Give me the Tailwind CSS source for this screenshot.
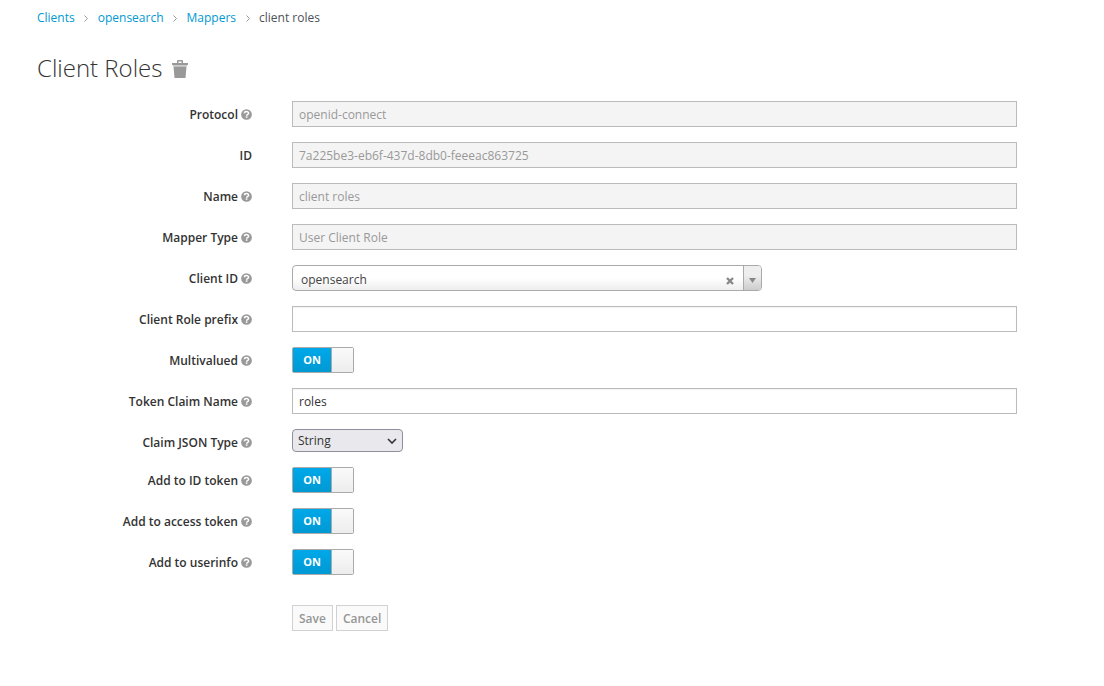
<!DOCTYPE html>
<html lang="en">
<head>
<meta charset="utf-8">
<meta name="viewport" content="width=device-width, initial-scale=1">
<title>Client Roles</title>
<script src="https://cdn.jsdelivr.net/npm/@tailwindcss/browser@4"></script>
</head>
<body class="bg-white font-['Open_Sans',sans-serif] text-xs text-[#333]">
<svg class="hidden" aria-hidden="true">
  <symbol id="help" viewBox="0 0 20 20">
    <circle cx="10" cy="10" r="9.700" fill="#999"/>
    <path d="M6.300 7.800C6.400 5.700 7.800 4.700 10 4.700c2.200 0 3.800 1.100 3.800 3 0 2.600-3.600 2.300-3.600 4.500" fill="none" stroke="#fff" stroke-width="2.800"/>
    <rect x="8.700" y="13.300" width="3" height="2.700" fill="#fff"/>
  </symbol>
</svg>
<main class="pl-[37px] pr-[87px] pb-10">
  <nav aria-label="Breadcrumb" class="pt-2">
    <ol class="flex items-center leading-5">
      <li><a href="#" class="text-[#0099d3]">Clients</a></li>
      <li aria-hidden="true" class="flex w-[23px] justify-center"><svg class="h-[7px] w-1" viewBox="0 0 4 7"><path d="M.5.5l3 3-3 3" fill="none" stroke="#999"/></svg></li>
      <li><a href="#" class="text-[#0099d3]">opensearch</a></li>
      <li aria-hidden="true" class="flex w-[23px] justify-center"><svg class="h-[7px] w-1" viewBox="0 0 4 7"><path d="M.5.5l3 3-3 3" fill="none" stroke="#999"/></svg></li>
      <li><a href="#" class="text-[#0099d3]">Mappers</a></li>
      <li aria-hidden="true" class="flex w-[23px] justify-center"><svg class="h-[7px] w-1" viewBox="0 0 4 7"><path d="M.5.5l3 3-3 3" fill="none" stroke="#999"/></svg></li>
      <li class="text-[#4d5258]">client roles</li>
    </ol>
  </nav>
  <div class="mt-6 flex h-8 items-center gap-[10px]">
    <h1 class="text-2xl font-light">Client Roles</h1>
    <button type="button" aria-label="Delete" class="mt-0.5">
      <svg class="h-[18px] w-4" viewBox="0 0 16 18"><path d="M0 3h5V1q0-1 1-1h4q1 0 1 1v2h5v2H0zM6.500 1.500V3h3V1.500z" fill="#999" fill-rule="evenodd"/><path d="M1 5h14v1.500H1z" fill="#ccc"/><path d="M1.500 6.500h13L13.500 18h-11z" fill="#999"/></svg>
    </button>
  </div>
  <form class="mt-[17px] flex flex-col gap-[15px]">
    <div class="flex items-start gap-10">
      <div class="flex h-5 w-[215px] shrink-0 justify-end gap-[3px] font-semibold leading-7"><label for="protocol">Protocol</label><svg class="mt-2 size-[11px]"><use href="#help"/></svg></div>
      <div class="flex flex-1"><input id="protocol" disabled value="openid-connect" class="h-[26px] w-full border border-[#bbb] bg-[#f4f4f4] px-1.5 text-[#999]"></div>
    </div>
    <div class="flex items-start gap-10">
      <div class="flex h-5 w-[215px] shrink-0 justify-end gap-[3px] font-semibold leading-7"><label for="id">ID</label></div>
      <div class="flex flex-1"><input id="id" disabled value="7a225be3-eb6f-437d-8db0-feeeac863725" class="h-[26px] w-full border border-[#bbb] bg-[#f4f4f4] px-1.5 text-[#999]"></div>
    </div>
    <div class="flex items-start gap-10">
      <div class="flex h-5 w-[215px] shrink-0 justify-end gap-[3px] font-semibold leading-7"><label for="name">Name</label><svg class="mt-2 size-[11px]"><use href="#help"/></svg></div>
      <div class="flex flex-1"><input id="name" disabled value="client roles" class="h-[26px] w-full border border-[#bbb] bg-[#f4f4f4] px-1.5 text-[#999]"></div>
    </div>
    <div class="flex items-start gap-10">
      <div class="flex h-5 w-[215px] shrink-0 justify-end gap-[3px] font-semibold leading-7"><label for="mapper">Mapper Type</label><svg class="mt-2 size-[11px]"><use href="#help"/></svg></div>
      <div class="flex flex-1"><input id="mapper" disabled value="User Client Role" class="h-[26px] w-full border border-[#bbb] bg-[#f4f4f4] px-1.5 text-[#999]"></div>
    </div>
    <div class="flex items-start gap-10">
      <div class="flex h-5 w-[215px] shrink-0 justify-end gap-[3px] font-semibold leading-7"><label for="client">Client ID</label><svg class="mt-2 size-[11px]"><use href="#help"/></svg></div>
      <div class="flex-1">
        <div class="relative h-[26px] w-full max-w-[470px]">
          <select id="client" class="h-full w-full appearance-none rounded border border-[#aaa] bg-linear-to-t from-[#eee] to-white to-50% pt-1 pr-12 pl-2 text-[#444]"><option>opensearch</option></select>
          <button type="button" aria-label="Clear" class="absolute top-3 right-7"><svg class="size-2" viewBox="0 0 8 8"><path d="M1 1l6 6M7 1L1 7" stroke="#888" stroke-width="2.400"/></svg></button>
          <span class="pointer-events-none absolute inset-y-px right-px flex w-[18px] items-center justify-center rounded-r-[3px] border-l border-[#aaa] bg-linear-to-t from-[#ccc] to-[#eee] to-60% pt-1"><svg class="h-[5px] w-[7px]" viewBox="0 0 7 5"><path d="M0 0h7L3.500 5z" fill="#888"/></svg></span>
        </div>
      </div>
    </div>
    <div class="flex items-start gap-10">
      <div class="flex h-5 w-[215px] shrink-0 justify-end gap-[3px] font-semibold leading-7"><label for="prefix">Client Role prefix</label><svg class="mt-2 size-[11px]"><use href="#help"/></svg></div>
      <div class="flex flex-1"><input id="prefix" class="h-[26px] w-full border border-[#bbb] px-1.5 inset-shadow-xs"></div>
    </div>
    <div class="flex items-start gap-10">
      <div class="flex h-5 w-[215px] shrink-0 justify-end gap-[3px] font-semibold leading-7"><label for="multi">Multivalued</label><svg class="mt-2 size-[11px]"><use href="#help"/></svg></div>
      <label class="relative flex h-[26px] w-[62px] rounded-[2px] border border-[#aaa] text-[11px] font-bold leading-6 text-white"><input id="multi" type="checkbox" checked class="sr-only"><span class="w-[38px] bg-linear-to-b from-[#00a8e9] to-[#0099d3] text-center">ON</span><span class="flex-1 border-l border-[#aaa] bg-linear-to-b from-[#fafafa] to-[#ededed]"></span></label>
    </div>
    <div class="flex items-start gap-10">
      <div class="flex h-5 w-[215px] shrink-0 justify-end gap-[3px] font-semibold leading-7"><label for="claim">Token Claim Name</label><svg class="mt-2 size-[11px]"><use href="#help"/></svg></div>
      <div class="flex flex-1"><input id="claim" value="roles" class="h-[26px] w-full border border-[#bbb] px-1.5 inset-shadow-xs"></div>
    </div>
    <div class="flex items-start gap-10">
      <div class="flex h-5 w-[215px] shrink-0 justify-end gap-[3px] font-semibold leading-7"><label for="json">Claim JSON Type</label><svg class="mt-2 size-[11px]"><use href="#help"/></svg></div>
      <div class="relative h-[23px] w-[111px]">
        <select id="json" class="h-full w-full appearance-none rounded border border-[#8f8f9d] bg-[#e9e9ed] pl-[5px]"><option>String</option></select>
        <svg class="pointer-events-none absolute top-[9px] right-1.5 h-1.5 w-[10px]" viewBox="0 0 10 6"><path d="M1 1l4 4 4-4" fill="none" stroke="#333" stroke-width="1.600"/></svg>
      </div>
    </div>
    <div class="flex items-start gap-10">
      <div class="flex h-5 w-[215px] shrink-0 justify-end gap-[3px] font-semibold leading-7"><label for="idtoken">Add to ID token</label><svg class="mt-2 size-[11px]"><use href="#help"/></svg></div>
      <label class="relative flex h-[26px] w-[62px] rounded-[2px] border border-[#aaa] text-[11px] font-bold leading-6 text-white"><input id="idtoken" type="checkbox" checked class="sr-only"><span class="w-[38px] bg-linear-to-b from-[#00a8e9] to-[#0099d3] text-center">ON</span><span class="flex-1 border-l border-[#aaa] bg-linear-to-b from-[#fafafa] to-[#ededed]"></span></label>
    </div>
    <div class="flex items-start gap-10">
      <div class="flex h-5 w-[215px] shrink-0 justify-end gap-[3px] font-semibold leading-7"><label for="access">Add to access token</label><svg class="mt-2 size-[11px]"><use href="#help"/></svg></div>
      <label class="relative flex h-[26px] w-[62px] rounded-[2px] border border-[#aaa] text-[11px] font-bold leading-6 text-white"><input id="access" type="checkbox" checked class="sr-only"><span class="w-[38px] bg-linear-to-b from-[#00a8e9] to-[#0099d3] text-center">ON</span><span class="flex-1 border-l border-[#aaa] bg-linear-to-b from-[#fafafa] to-[#ededed]"></span></label>
    </div>
    <div class="flex items-start gap-10">
      <div class="flex h-5 w-[215px] shrink-0 justify-end gap-[3px] font-semibold leading-7"><label for="userinfo">Add to userinfo</label><svg class="mt-2 size-[11px]"><use href="#help"/></svg></div>
      <label class="relative flex h-[26px] w-[62px] rounded-[2px] border border-[#aaa] text-[11px] font-bold leading-6 text-white"><input id="userinfo" type="checkbox" checked class="sr-only"><span class="w-[38px] bg-linear-to-b from-[#00a8e9] to-[#0099d3] text-center">ON</span><span class="flex-1 border-l border-[#aaa] bg-linear-to-b from-[#fafafa] to-[#ededed]"></span></label>
    </div>
    <div class="mt-[15px] ml-[255px] flex gap-[3px] font-semibold text-[#969696]">
      <button type="submit" disabled class="h-[26px] border border-[#d1d1d1] bg-[#fafafa] px-1.5 pt-0.5">Save</button>
      <button type="button" disabled class="h-[26px] border border-[#d1d1d1] bg-[#fafafa] px-1.5 pt-0.5">Cancel</button>
    </div>
  </form>
</main>
</body>
</html>
